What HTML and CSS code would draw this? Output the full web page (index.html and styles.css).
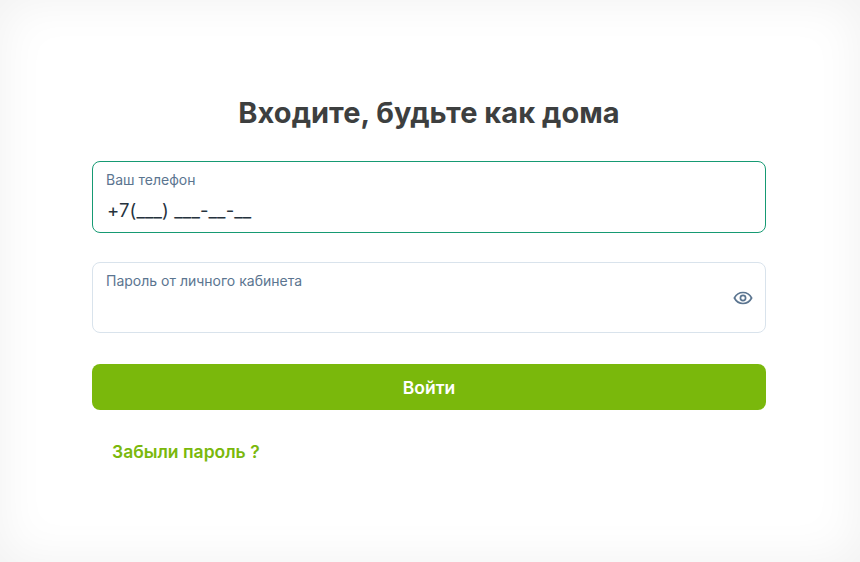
FILE: index.html
```html
<!DOCTYPE html>
<html lang="ru">
<head>
<meta charset="utf-8">
<title>Вход</title>
<link rel="stylesheet" href="styles.css">
</head>
<body>
<main class="panel">
  <h1 class="title">Входите, будьте как дома</h1>
  <form class="form">
    <div class="field field-active">
      <span class="label">Ваш телефон</span>
      <span class="value">+7(___) ___-__-__</span>
    </div>
    <div class="field">
      <span class="label">Пароль от личного кабинета</span>
      <svg class="eye" width="20" height="20" viewBox="0 0 20 20" fill="none" stroke="#5b7590" stroke-width="1.7">
        <path d="M1.400 10C3.300 6.400 6.300 4.500 10 4.500s6.700 1.900 8.600 5.500c-1.900 3.600-4.900 5.500-8.600 5.500S3.300 13.600 1.400 10Z"/>
        <circle cx="10" cy="10" r="2.600"/>
      </svg>
    </div>
    <button class="submit" type="button">Войти</button>
  </form>
  <a class="forgot" href="#">Забыли пароль ?</a>
</main>
</body>
</html>
```

FILE: styles.css
```css
* { box-sizing: border-box; }
html, body { margin: 0; height: 100%; }
body {
  font-family: Inter, "Liberation Sans", sans-serif;
  background: #fff;
}
.panel {
  height: 562px;
  padding: 95px 94px 0 92px;
  box-shadow: inset 0 0 50px rgba(0, 0, 0, 0.06);
  background: #fff;
}
.title {
  margin: 0 0 30px;
  font-size: 29px;
  line-height: 36px;
  font-weight: 700;
  letter-spacing: 0.03px;
  color: #3d3f3f;
  text-align: center;
}
.form { display: flex; flex-direction: column; }
.field {
  position: relative;
  height: 71px;
  margin-bottom: 30px;
  padding: 9px 13px 0;
  border: 1px solid #d9e3ec;
  border-radius: 8px;
  background: #fff;
}
.field-active { height: 72px; border-color: #169a73; margin-bottom: 29px; }
.label {
  display: block;
  font-size: 14px;
  line-height: 18px;
  color: #5b7590;
}
.value {
  display: block;
  margin-top: 9px;
  padding-left: 1px;
  font-size: 18.5px;
  line-height: 24px;
  letter-spacing: 0.12px;
  color: #26323d;
}
.eye { position: absolute; right: 12px; top: 25px; }
.submit {
  height: 46px;
  margin-top: 1px;
  border: 0;
  border-radius: 8px;
  background: #7ab80c;
  color: #fff;
  font: 600 17.5px Inter, "Liberation Sans", sans-serif;
}
.forgot {
  display: inline-block;
  margin: 31px 0 0 20px;
  font-size: 17.5px;
  line-height: 22px;
  font-weight: 600;
  color: #7ab80c;
  text-decoration: none;
}
```
